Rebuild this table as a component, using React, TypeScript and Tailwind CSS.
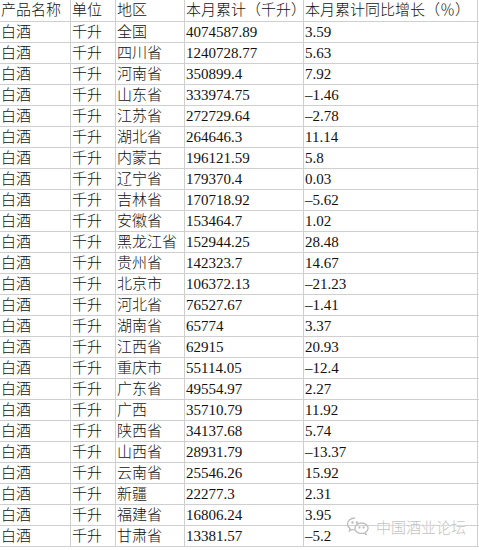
const rows: [string, string, string][] = [
  ["全国", "4074587.89", "3.59"],
  ["四川省", "1240728.77", "5.63"],
  ["河南省", "350899.4", "7.92"],
  ["山东省", "333974.75", "–1.46"],
  ["江苏省", "272729.64", "–2.78"],
  ["湖北省", "264646.3", "11.14"],
  ["内蒙古", "196121.59", "5.8"],
  ["辽宁省", "179370.4", "0.03"],
  ["吉林省", "170718.92", "–5.62"],
  ["安徽省", "153464.7", "1.02"],
  ["黑龙江省", "152944.25", "28.48"],
  ["贵州省", "142323.7", "14.67"],
  ["北京市", "106372.13", "–21.23"],
  ["河北省", "76527.67", "–1.41"],
  ["湖南省", "65774", "3.37"],
  ["江西省", "62915", "20.93"],
  ["重庆市", "55114.05", "–12.4"],
  ["广东省", "49554.97", "2.27"],
  ["广西", "35710.79", "11.92"],
  ["陕西省", "34137.68", "5.74"],
  ["山西省", "28931.79", "–13.37"],
  ["云南省", "25546.26", "15.92"],
  ["新疆", "22277.3", "2.31"],
  ["福建省", "16806.24", "3.95"],
  ["甘肃省", "13381.57", "–5.2"],
];

const cell = "flex items-center whitespace-nowrap border-r border-[#cfcfcf] pl-[1px]";

function Row({ cols, header }: { cols: string[]; header?: boolean }) {
  return (
    <div className={`flex border-b border-[#cfcfcf] ${header ? "h-[22px]" : "h-[21px]"}`}>
      <div className={`${cell} w-[71px] pl-0`}>{cols[0]}</div>
      <div className={`${cell} w-[45px]`}>{cols[1]}</div>
      <div className={`${cell} w-[69px]`}>{cols[2]}</div>
      <div className={`${cell} w-[119px]`}>{cols[3]}</div>
      <div className={`${cell} w-[174px]`}>{cols[4]}</div>
    </div>
  );
}

export default function App() {
  return (
    <div className="relative w-[479px] h-[550px] overflow-hidden bg-white text-[15px] leading-none font-light text-[#111] font-['Liberation_Serif','Noto_Sans_CJK_SC',serif]">
      <Row header cols={["产品名称", "单位", "地区", "本月累计（千升）", "本月累计同比增长（％）"]} />
      {rows.map(([region, total, growth]) => (
        <Row key={region} cols={["白酒", "千升", region, total, growth]} />
      ))}

      {/* watermark */}
      <div className="absolute left-[346px] top-[516px] flex items-center gap-[6px] text-[#c4c4c4] [text-shadow:0_0_2px_#fff,0_0_2px_#fff]">
        <svg width="24" height="20" viewBox="0 0 24 20" fill="none" stroke="#bdbdbd" strokeWidth="1.3">
          <path d="M9 2C4.6 2 1.5 4.7 1.5 8c0 1.9 1 3.5 2.6 4.6L3.4 15l2.8-1.5c.9.3 1.8.4 2.8.4" />
          <path d="M15.5 7c-3.7 0-6.6 2.3-6.6 5.2s2.9 5.2 6.6 5.2c.8 0 1.5-.1 2.2-.3l2.3 1.2-.6-2c1.6-1 2.7-2.5 2.7-4.1 0-2.9-2.9-5.2-6.6-5.2z" />
          <circle cx="6.5" cy="6.5" r="0.6" fill="#bdbdbd" />
          <circle cx="11" cy="6.5" r="0.6" fill="#bdbdbd" />
          <circle cx="13.5" cy="11.5" r="0.5" fill="#bdbdbd" />
          <circle cx="17.5" cy="11.5" r="0.5" fill="#bdbdbd" />
        </svg>
        <span className="font-['Noto_Sans_CJK_SC',sans-serif] font-light">中国酒业论坛</span>
      </div>
    </div>
  );
}
